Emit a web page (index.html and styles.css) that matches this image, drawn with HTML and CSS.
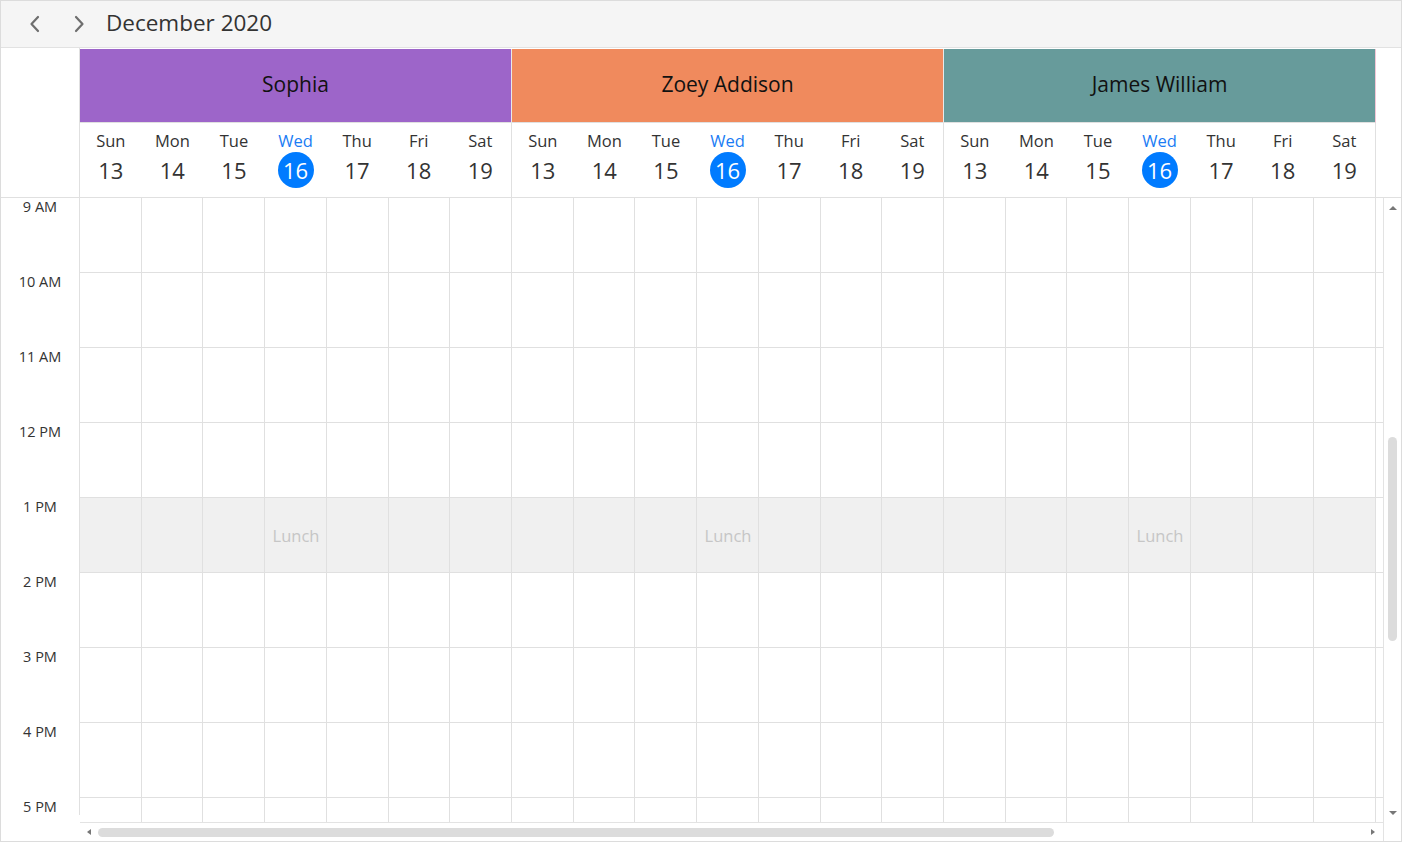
FILE: index.html
```
<!DOCTYPE html>
<html>
<head>
<meta charset="utf-8">
<title>Scheduler</title>
<link rel="stylesheet" href="styles.css">
</head>
<body>
<div class="scheduler">
  <div class="toolbar">
    <button class="nav-btn" aria-label="Previous"><svg width="14" height="20" viewBox="0 0 14 20"><polyline points="10,3 3.5,10 10,17" fill="none" stroke="#6e6e6e" stroke-width="2.2" stroke-linecap="round" stroke-linejoin="round"/></svg></button>
    <button class="nav-btn" aria-label="Next"><svg width="14" height="20" viewBox="0 0 14 20"><polyline points="4,3 10.5,10 4,17" fill="none" stroke="#6e6e6e" stroke-width="2.2" stroke-linecap="round" stroke-linejoin="round"/></svg></button>
    <div class="title">December 2020</div>
  </div>

  <div class="header">
    <div class="corner"></div>
    <div class="res-area">
      <div class="res-names">
        <div class="res-name sophia">Sophia</div>
        <div class="res-name zoey">Zoey Addison</div>
        <div class="res-name james">James William</div>
      </div>
      <div class="dates">
        <div class="res-dates">
          <div class="day"><span class="dn">Sun</span><span class="dd">13</span></div>
          <div class="day"><span class="dn">Mon</span><span class="dd">14</span></div>
          <div class="day"><span class="dn">Tue</span><span class="dd">15</span></div>
          <div class="day today"><span class="dn">Wed</span><span class="dd">16</span></div>
          <div class="day"><span class="dn">Thu</span><span class="dd">17</span></div>
          <div class="day"><span class="dn">Fri</span><span class="dd">18</span></div>
          <div class="day"><span class="dn">Sat</span><span class="dd">19</span></div>
        </div>
        <div class="res-dates">
          <div class="day"><span class="dn">Sun</span><span class="dd">13</span></div>
          <div class="day"><span class="dn">Mon</span><span class="dd">14</span></div>
          <div class="day"><span class="dn">Tue</span><span class="dd">15</span></div>
          <div class="day today"><span class="dn">Wed</span><span class="dd">16</span></div>
          <div class="day"><span class="dn">Thu</span><span class="dd">17</span></div>
          <div class="day"><span class="dn">Fri</span><span class="dd">18</span></div>
          <div class="day"><span class="dn">Sat</span><span class="dd">19</span></div>
        </div>
        <div class="res-dates">
          <div class="day"><span class="dn">Sun</span><span class="dd">13</span></div>
          <div class="day"><span class="dn">Mon</span><span class="dd">14</span></div>
          <div class="day"><span class="dn">Tue</span><span class="dd">15</span></div>
          <div class="day today"><span class="dn">Wed</span><span class="dd">16</span></div>
          <div class="day"><span class="dn">Thu</span><span class="dd">17</span></div>
          <div class="day"><span class="dn">Fri</span><span class="dd">18</span></div>
          <div class="day"><span class="dn">Sat</span><span class="dd">19</span></div>
        </div>
      </div>
    </div>
    <div class="head-fill"></div>
  </div>

  <div class="body">
    <div class="time-col">
      <div class="time">9 AM</div>
      <div class="time">10 AM</div>
      <div class="time">11 AM</div>
      <div class="time">12 PM</div>
      <div class="time">1 PM</div>
      <div class="time">2 PM</div>
      <div class="time">3 PM</div>
      <div class="time">4 PM</div>
      <div class="time">5 PM</div>
    </div>
    <div class="content">
      <div class="content-main">
        <div class="grid">
          <div class="row">
            <div class="grp"><span class="c"></span><span class="c"></span><span class="c"></span><span class="c"></span><span class="c"></span><span class="c"></span><span class="c"></span></div>
            <div class="grp"><span class="c"></span><span class="c"></span><span class="c"></span><span class="c"></span><span class="c"></span><span class="c"></span><span class="c"></span></div>
            <div class="grp"><span class="c"></span><span class="c"></span><span class="c"></span><span class="c"></span><span class="c"></span><span class="c"></span><span class="c"></span></div>
            <div class="fill"></div>
          </div>
          <div class="row">
            <div class="grp"><span class="c"></span><span class="c"></span><span class="c"></span><span class="c"></span><span class="c"></span><span class="c"></span><span class="c"></span></div>
            <div class="grp"><span class="c"></span><span class="c"></span><span class="c"></span><span class="c"></span><span class="c"></span><span class="c"></span><span class="c"></span></div>
            <div class="grp"><span class="c"></span><span class="c"></span><span class="c"></span><span class="c"></span><span class="c"></span><span class="c"></span><span class="c"></span></div>
            <div class="fill"></div>
          </div>
          <div class="row">
            <div class="grp"><span class="c"></span><span class="c"></span><span class="c"></span><span class="c"></span><span class="c"></span><span class="c"></span><span class="c"></span></div>
            <div class="grp"><span class="c"></span><span class="c"></span><span class="c"></span><span class="c"></span><span class="c"></span><span class="c"></span><span class="c"></span></div>
            <div class="grp"><span class="c"></span><span class="c"></span><span class="c"></span><span class="c"></span><span class="c"></span><span class="c"></span><span class="c"></span></div>
            <div class="fill"></div>
          </div>
          <div class="row">
            <div class="grp"><span class="c"></span><span class="c"></span><span class="c"></span><span class="c"></span><span class="c"></span><span class="c"></span><span class="c"></span></div>
            <div class="grp"><span class="c"></span><span class="c"></span><span class="c"></span><span class="c"></span><span class="c"></span><span class="c"></span><span class="c"></span></div>
            <div class="grp"><span class="c"></span><span class="c"></span><span class="c"></span><span class="c"></span><span class="c"></span><span class="c"></span><span class="c"></span></div>
            <div class="fill"></div>
          </div>
          <div class="row lunch">
            <div class="grp"><span class="c"></span><span class="c"></span><span class="c"></span><span class="c"></span><span class="c"></span><span class="c"></span><span class="c"></span><div class="block">Lunch</div></div>
            <div class="grp"><span class="c"></span><span class="c"></span><span class="c"></span><span class="c"></span><span class="c"></span><span class="c"></span><span class="c"></span><div class="block">Lunch</div></div>
            <div class="grp"><span class="c"></span><span class="c"></span><span class="c"></span><span class="c"></span><span class="c"></span><span class="c"></span><span class="c"></span><div class="block">Lunch</div></div>
            <div class="fill"></div>
          </div>
          <div class="row">
            <div class="grp"><span class="c"></span><span class="c"></span><span class="c"></span><span class="c"></span><span class="c"></span><span class="c"></span><span class="c"></span></div>
            <div class="grp"><span class="c"></span><span class="c"></span><span class="c"></span><span class="c"></span><span class="c"></span><span class="c"></span><span class="c"></span></div>
            <div class="grp"><span class="c"></span><span class="c"></span><span class="c"></span><span class="c"></span><span class="c"></span><span class="c"></span><span class="c"></span></div>
            <div class="fill"></div>
          </div>
          <div class="row">
            <div class="grp"><span class="c"></span><span class="c"></span><span class="c"></span><span class="c"></span><span class="c"></span><span class="c"></span><span class="c"></span></div>
            <div class="grp"><span class="c"></span><span class="c"></span><span class="c"></span><span class="c"></span><span class="c"></span><span class="c"></span><span class="c"></span></div>
            <div class="grp"><span class="c"></span><span class="c"></span><span class="c"></span><span class="c"></span><span class="c"></span><span class="c"></span><span class="c"></span></div>
            <div class="fill"></div>
          </div>
          <div class="row">
            <div class="grp"><span class="c"></span><span class="c"></span><span class="c"></span><span class="c"></span><span class="c"></span><span class="c"></span><span class="c"></span></div>
            <div class="grp"><span class="c"></span><span class="c"></span><span class="c"></span><span class="c"></span><span class="c"></span><span class="c"></span><span class="c"></span></div>
            <div class="grp"><span class="c"></span><span class="c"></span><span class="c"></span><span class="c"></span><span class="c"></span><span class="c"></span><span class="c"></span></div>
            <div class="fill"></div>
          </div>
          <div class="row">
            <div class="grp"><span class="c"></span><span class="c"></span><span class="c"></span><span class="c"></span><span class="c"></span><span class="c"></span><span class="c"></span></div>
            <div class="grp"><span class="c"></span><span class="c"></span><span class="c"></span><span class="c"></span><span class="c"></span><span class="c"></span><span class="c"></span></div>
            <div class="grp"><span class="c"></span><span class="c"></span><span class="c"></span><span class="c"></span><span class="c"></span><span class="c"></span><span class="c"></span></div>
            <div class="fill"></div>
          </div>
        </div>
        <div class="vscroll">
          <span class="arrow up"></span>
          <div class="vtrack"><div class="vthumb"></div></div>
          <span class="arrow down"></span>
        </div>
      </div>
      <div class="content-foot">
        <div class="hscroll">
          <span class="arrow left"></span>
          <div class="htrack"><div class="hthumb"></div></div>
          <span class="arrow right"></span>
        </div>
        <div class="corner-box"></div>
      </div>
    </div>
  </div>
</div>
</body>
</html>
```
FILE: styles.css
```
* { box-sizing: border-box; }
html, body { margin: 0; padding: 0; background: #fff; }
body { font-family: "Open Sans", "Noto Sans", sans-serif; color: #333; }

.scheduler {
  width: 1402px;
  height: 842px;
  border: 1px solid #dcdcdc;
  display: flex;
  flex-direction: column;
  overflow: hidden;
  background: #fff;
}

/* toolbar */
.toolbar {
  flex: none;
  height: 47px;
  background: #f5f5f5;
  border-bottom: 1px solid #e2e2e2;
  display: flex;
  align-items: center;
  padding-left: 12px;
}
.nav-btn {
  width: 44px;
  height: 36px;
  border: 0;
  background: transparent;
  padding: 0;
  display: flex;
  align-items: center;
  justify-content: center;
}
.title {
  margin-left: 5px;
  padding-bottom: 4px;
  font-size: 22.5px;
  color: #333;
  letter-spacing: 0;
}

/* header */
.header {
  flex: none;
  height: 150px;
  display: flex;
  border-bottom: 1px solid #e0e0e0;
}
.corner {
  width: 79px;
  border-right: 1px solid #e0e0e0;
}
.res-area {
  width: 1296px;
  padding-top: 1px;
  display: flex;
  flex-direction: column;
}
.res-names { display: flex; height: 74px; }
.res-name {
  width: 432px;
  border-right: 1px solid #e9e9e9;
  border-bottom: 1px solid #e0e0e0;
  display: flex;
  align-items: center;
  justify-content: center;
  padding-bottom: 4px;
  font-size: 21px;
  color: #111;
}
.sophia { background: #9d65c9; }
.zoey { background: #f08a5d; }
.james { background: #679b9b; border-right-color: #f3c6d6; }

.dates { display: flex; height: 74px; }
.res-dates {
  width: 432px;
  display: flex;
  border-right: 1px solid #e0e0e0;
}
.day {
  flex: 1;
  display: flex;
  flex-direction: column;
  align-items: center;
  padding-top: 7px;
}
.dn { font-size: 16.5px; line-height: 22px; color: #333; }
.dd {
  font-size: 22px;
  width: 36px;
  height: 36px;
  line-height: 36px;
  text-align: center;
  border-radius: 50%;
  color: #333;
}
.today .dn { color: #1a7cf4; }
.today .dd { background: #007bff; color: #fff; }
.head-fill { flex: 1; }

/* body */
.body {
  flex: 1;
  display: flex;
  min-height: 0;
}
.time-col {
  width: 79px;
  height: 617px;
  border-right: 1px solid #e0e0e0;
  overflow: hidden;
  flex: none;
}
.time {
  height: 75px;
  font-size: 14.5px;
  line-height: 17px;
  text-align: center;
  color: #333;
}
.content {
  flex: 1;
  display: flex;
  flex-direction: column;
}
.content-main { display: flex; height: 624px; }
.grid {
  width: 1303px;
  height: 624px;
  overflow: hidden;
}
.row {
  display: flex;
  height: 75px;
  border-bottom: 1px solid #e0e0e0;
}
.grp {
  width: 432px;
  display: grid;
  grid-template-columns: repeat(7, 1fr);
  position: relative;
}
.c { border-right: 1px solid #e0e0e0; }
.fill { flex: 1; }
.lunch .grp { background: #f0f0f0; }
.block {
  position: absolute;
  inset: 0;
  display: flex;
  align-items: center;
  justify-content: center;
  font-size: 16.5px;
  color: #c6c6c6;
}

/* scrollbars */
.vscroll {
  width: 18px;
  border-left: 1px solid #e3e3e3;
  display: flex;
  flex-direction: column;
  align-items: center;
}
.vtrack { flex: 1; width: 100%; padding-top: 227px; display: flex; justify-content: center; }
.vthumb { width: 9px; height: 204px; border-radius: 5px; background: #dcdcdc; }
.content-foot { display: flex; height: 19px; }
.hscroll {
  width: 1303px;
  border-top: 1px solid #e3e3e3;
  display: flex;
  align-items: center;
  padding: 0 8px 0 7px;
}
.htrack { flex: 1; display: flex; align-items: center; padding-left: 7px; }
.hthumb { width: 956px; height: 9px; border-radius: 5px; background: #dcdcdc; }
.corner-box { width: 18px; border-left: 1px solid #e3e3e3; }

.arrow { width: 0; height: 0; border-style: solid; border-color: transparent; display: block; flex: none; }
.arrow.up { border-width: 0 4px 4px 4px; border-bottom-color: #777; margin-top: 8px; }
.arrow.down { border-width: 4px 4px 0 4px; border-top-color: #777; margin-bottom: 7px; margin-top: 8px; }
.arrow.left { border-width: 3.5px 4px 3.5px 0; border-right-color: #777; }
.arrow.right { border-width: 3.5px 0 3.5px 4px; border-left-color: #777; }
```
